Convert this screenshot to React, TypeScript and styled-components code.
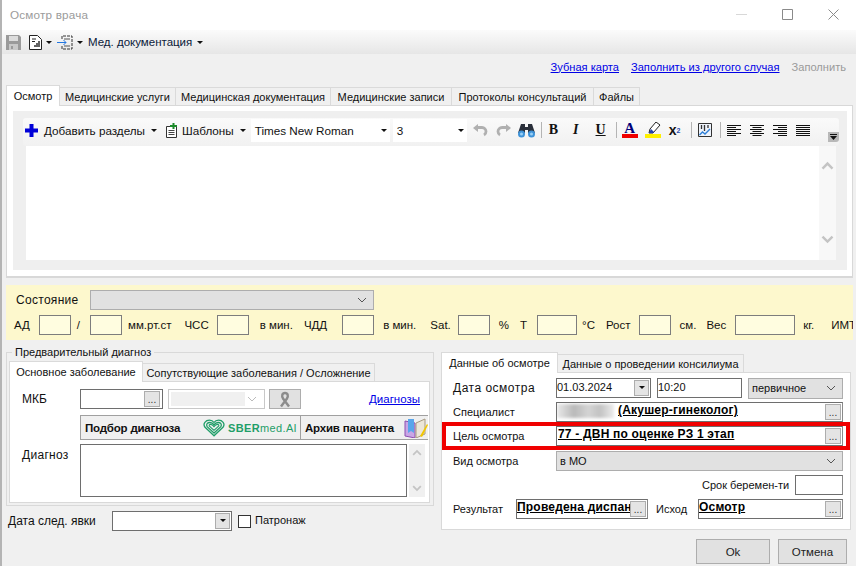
import React, { FC, ReactNode } from "react"
import styled, { createGlobalStyle } from "styled-components"

const GlobalStyle = createGlobalStyle`
  html, body {
    margin: 0;
    padding: 0;
    background: #f0f0f0;
  }
  * {
    box-sizing: border-box;
  }
`

const Window = styled.div`
  width: 856px;
  height: 566px;
  overflow: hidden;
  display: flex;
  flex-direction: column;
  background: #f0f0f0;
  border-left: 2px solid #b4b4b4;
  font-family: "Liberation Sans", Arial, sans-serif;
  font-size: 11px;
  color: #111;
`

const TitleBar = styled.div`
  height: 30px;
  flex: none;
  display: flex;
  align-items: center;
  background: #fff;
  padding: 0 0 2px 8px;
  color: #9b9b9b;
  font-size: 11.7px;
  letter-spacing: 0.2px;
`

const TitleText = styled.span`
  flex: 1;
`

const CaptionButton = styled.div`
  width: 46px;
  display: flex;
  justify-content: center;
`

const MenuBar = styled.div`
  height: 24px;
  flex: none;
  display: flex;
  align-items: center;
  padding-left: 4px;
  font-size: 11.5px;
  background: linear-gradient(#fbfbfb, #e6e6e6);
`

const MenuItem = styled.div<{ $ml?: number }>`
  display: flex;
  align-items: center;
  margin-left: ${(p) => p.$ml ?? 0}px;
  color: #0b1a3a;
`

const Caret = styled.span<{ $ml?: number }>`
  width: 0;
  height: 0;
  margin-left: ${(p) => p.$ml ?? 4}px;
  border-left: 3px solid transparent;
  border-right: 3px solid transparent;
  border-top: 3px solid #111;
`

const LinksBar = styled.div`
  height: 31px;
  flex: none;
  display: flex;
  align-items: center;
  justify-content: flex-end;
  gap: 12px;
  padding: 0 10px 6px 0;
  font-size: 11.1px;
`

const LinkText = styled.a<{ $off?: boolean }>`
  color: ${(p) => (p.$off ? "#9a9a9a" : "#0000e6")};
  text-decoration: ${(p) => (p.$off ? "none" : "underline")};
  cursor: pointer;
`

const TabStrip = styled.div<{ $ml?: number }>`
  display: flex;
  height: 20px;
  flex: none;
  margin-left: ${(p) => p.$ml ?? 0}px;
  position: relative;
  z-index: 1;
`

const Tab = styled.div<{ $w: number; $active?: boolean }>`
  width: ${(p) => p.$w}px;
  display: flex;
  align-items: center;
  justify-content: center;
  white-space: nowrap;
  border: 1px solid #dadada;
  border-left-width: ${(p) => (p.$active ? 1 : 0)}px;
  border-bottom: none;
  background: ${(p) => (p.$active ? "#fff" : "#f0f0f0")};
  margin-top: ${(p) => (p.$active ? 0 : 2)}px;
  height: ${(p) => (p.$active ? "calc(100% + 1px)" : "calc(100% - 2px)")};
`

const ExamPanel = styled.div`
  flex: none;
  height: 173px;
  margin: 0 3px 0 4px;
  padding: 5px 5px 6px 6px;
  background: #fff;
  border: 1px solid #d8d8d8;
  border-bottom-width: 2px;
`

const EditorArea = styled.div`
  height: 100%;
  padding: 7px 8px 10px 10px;
  background: #efefef;
  display: flex;
  flex-direction: column;
`

const Toolbar = styled.div`
  height: 28px;
  flex: none;
  display: flex;
  align-items: center;
  position: relative;
  font-size: 11.7px;
  background: linear-gradient(#fafafa, #f1f1f1);
  border-radius: 3px;
  padding: 0 0 4px 2px;
`

const ToolItem = styled.div<{ $ml?: number; $w?: number }>`
  display: flex;
  align-items: center;
  flex: none;
  white-space: nowrap;
  width: ${(p) => (p.$w ? `${p.$w}px` : "auto")};
  margin-left: ${(p) => p.$ml ?? 0}px;
`

const ToolLetter = styled(ToolItem)<{ $italic?: boolean; $underline?: boolean }>`
  font-family: "Liberation Serif", serif;
  font-weight: bold;
  font-size: 14px;
  font-style: ${(p) => (p.$italic ? "italic" : "normal")};
  text-decoration: ${(p) => (p.$underline ? "underline" : "none")};
`

const PowerLetter = styled(ToolItem)`
  font-weight: bold;
  font-size: 14px;
  sup {
    font-size: 7px;
    color: #2a4fb0;
  }
`

const FontSelect = styled.div<{ $w: number; $ml: number }>`
  width: ${(p) => p.$w}px;
  height: 23px;
  flex: none;
  margin-left: ${(p) => p.$ml}px;
  display: flex;
  align-items: center;
  justify-content: space-between;
  padding: 0 3px 0 4px;
  background: #fff;
`

const ToolSep = styled.div<{ $ml: number }>`
  width: 1px;
  height: 16px;
  flex: none;
  margin-left: ${(p) => p.$ml}px;
  background: #b4b4b4;
`

const ColorLetter = styled.div`
  width: 16px;
  flex: none;
  margin-left: 5px;
  display: flex;
  flex-direction: column;
  align-items: center;
  font-family: "Liberation Serif", serif;
  font-weight: bold;
  font-size: 15px;
  line-height: 12px;
  color: #00007a;
  &::after {
    content: "";
    width: 16px;
    height: 4px;
    background: #f00000;
  }
`

const ToolEnd = styled.div`
  position: absolute;
  right: 0;
  top: 14px;
  width: 11px;
  height: 10px;
  display: flex;
  align-items: center;
  justify-content: center;
  background: #b8b8b8;
  border-radius: 0 0 3px 0;
`

const EditorBody = styled.div`
  flex: 1;
  display: flex;
  margin: 0 3px;
`

const EditorText = styled.div`
  flex: 1;
  background: #fff;
`

const ScrollTrack = styled.div`
  width: 17px;
  flex: none;
  display: flex;
  flex-direction: column;
  justify-content: space-between;
  align-items: center;
  padding: 15px 0 16px;
  background: #f8f8f8;
`

const SmallScroll = styled(ScrollTrack)`
  width: 16px;
  margin-left: 2px;
  padding: 5px 0;
  background: #f0f0f0;
`

const StatePanel = styled.div`
  flex: none;
  height: 55px;
  margin: 7px 3px 0 4px;
  padding: 5px 0 0 8px;
  font-size: 11.5px;
  background: #fdf8cd;
  overflow: hidden;
`

const StateRow = styled.div`
  height: 20px;
  display: flex;
  align-items: center;
  white-space: nowrap;
`

const StateLabel = styled.span`
  width: 74px;
  margin-left: 2px;
  font-size: 12px;
  letter-spacing: 0.3px;
`

const VitalRow = styled.div`
  height: 20px;
  margin-top: 5px;
  display: flex;
  align-items: center;
  white-space: nowrap;
`

const VitalText = styled.span<{ $ml: number }>`
  margin-left: ${(p) => p.$ml}px;
`

const VitalInput = styled.div<{ $w: number; $ml: number }>`
  width: ${(p) => p.$w}px;
  height: 20px;
  flex: none;
  margin-left: ${(p) => p.$ml}px;
  background: #fffde0;
  border: 1px solid #7d7d7d;
`

const SelectBox = styled.div<{ $w: number; $ml?: number; $h?: number }>`
  width: ${(p) => p.$w}px;
  height: ${(p) => p.$h ?? 20}px;
  flex: none;
  margin-left: ${(p) => p.$ml ?? 0}px;
  display: flex;
  align-items: center;
  justify-content: space-between;
  padding: 0 6px 0 3px;
  background: #e1e1e1;
  border: 1px solid #adadad;
`

const Columns = styled.div`
  flex: none;
  display: flex;
  gap: 7px;
  margin: 5px 0 0 4px;
`

const LeftColumn = styled.div`
  width: 428px;
  flex: none;
`

const Group = styled.fieldset`
  height: 161px;
  margin: 0;
  padding: 2px 3px 2px 2px;
  min-width: 0;
  border: 1px solid #d9d9d9;
`

const GroupTitle = styled.legend`
  margin-left: 3px;
  padding: 0 3px;
  line-height: 14px;
`

const TabPanel = styled.div<{ $h: number }>`
  height: ${(p) => p.$h}px;
  background: #fff;
  border: 1px solid #d9d9d9;
`

const DiagnosisPanel = styled(TabPanel)`
  padding: 7px 4px 0 12px;
  display: flex;
  flex-direction: column;
`

const MkbRow = styled.div`
  height: 20px;
  flex: none;
  display: flex;
  align-items: center;
`

const MkbLabel = styled.span`
  width: 58px;
  flex: none;
  font-size: 12px;
`

const PickInput = styled.div`
  width: 83px;
  height: 20px;
  flex: none;
  display: flex;
  align-items: center;
  justify-content: flex-end;
  padding-right: 1px;
  background: #fff;
  border: 1px solid #6e6e6e;
`

const DisabledSelect = styled.div`
  width: 97px;
  height: 20px;
  flex: none;
  margin-left: 5px;
  display: flex;
  align-items: center;
  justify-content: space-between;
  padding: 2px 7px 2px 2px;
  background: #fff;
  border: 1px solid #c8c8c8;
`

const DisabledFill = styled.div`
  width: 74px;
  height: 100%;
  background: #f0f0f0;
`

const RibbonButton = styled.div`
  width: 32px;
  height: 20px;
  flex: none;
  margin-left: 4px;
  display: flex;
  align-items: center;
  justify-content: center;
  background: #e1e1e1;
  border: 1px solid #adadad;
`

const DiagnosesLink = styled(LinkText)`
  margin-left: auto;
  margin-right: 5px;
  font-size: 11.5px;
`

const HelperRow = styled.div`
  width: 348px;
  height: 25px;
  flex: none;
  margin: 6px 0 0 58px;
  display: flex;
  overflow: hidden;
`

const HelperButton = styled.div<{ $w: number }>`
  width: ${(p) => p.$w}px;
  flex: none;
  display: flex;
  align-items: center;
  padding-left: 4px;
  background: #f0f0f0;
  border: 1px solid #a0a0a0;
  border-right-width: 0;
  font-size: 11.5px;
  font-weight: bold;
  letter-spacing: -0.2px;
  white-space: nowrap;
`

const HelperName = styled.span`
  flex: 1;
`

const BrandText = styled.span`
  margin: 0 3px 0 3px;
  color: #1f9e68;
  font-weight: normal;
  font-size: 11px;
  letter-spacing: 0.35px;
  b {
    font-weight: bold;
  }
`

const DiagnosisRow = styled.div`
  flex: none;
  display: flex;
  margin-top: 4px;
`

const DiagnosisLabel = styled.span`
  width: 58px;
  flex: none;
  padding-top: 4px;
  font-size: 12px;
  letter-spacing: 0.3px;
`

const DiagnosisText = styled.div`
  width: 328px;
  height: 53px;
  background: #fff;
  border: 1px solid #6e6e6e;
`

const NextVisitRow = styled.div`
  margin-top: 5px;
  padding-left: 2px;
  display: flex;
  align-items: center;
`

const NextVisitLabel = styled.span`
  width: 104px;
  flex: none;
  font-size: 12px;
`

const DateBox = styled.div<{ $w: number; $ml?: number }>`
  width: ${(p) => p.$w}px;
  height: 20px;
  flex: none;
  margin-left: ${(p) => p.$ml ?? 0}px;
  display: flex;
  align-items: center;
  justify-content: space-between;
  padding: 0 1px 3px 0;
  background: #fff;
  border: 1px solid #6e6e6e;
`

const DateArrow = styled.div`
  width: 15px;
  height: 16px;
  margin-bottom: -2px;
  display: flex;
  align-items: center;
  justify-content: center;
  background: #e4e4e4;
  border: 1px solid #adadad;
`

const CheckBox = styled.div`
  width: 13px;
  height: 13px;
  margin-left: 6px;
  background: #fff;
  border: 1px solid #333;
`

const CheckLabel = styled.span`
  margin-left: 4px;
  margin-top: -2px;
`

const RightColumn = styled.div`
  width: 410px;
  flex: none;
  padding-top: 7px;
`

const ExamDataPanel = styled(TabPanel)`
  padding: 5px 7px 0 11px;
  display: flex;
  flex-direction: column;
`

const FormRow = styled.div<{ $mt?: number }>`
  height: 20px;
  flex: none;
  display: flex;
  align-items: center;
  margin-top: ${(p) => p.$mt ?? 0}px;
`

const SpacedRow = styled(FormRow)`
  justify-content: flex-end;
`

const HighlightRow = styled.div`
  height: 28px;
  flex: none;
  display: flex;
  align-items: center;
  margin: 0 -7px 0 -11px;
  padding: 0 4px 0 7px;
  border: 4px solid #f00000;
`

const RowLabel = styled.span<{ $w: number; $ml?: number }>`
  width: ${(p) => p.$w}px;
  flex: none;
  margin-left: ${(p) => p.$ml ?? 0}px;
`

const WideLabel = styled(RowLabel)`
  font-size: 12px;
  letter-spacing: 0.5px;
`

const TextField = styled.div<{ $w: number }>`
  width: ${(p) => p.$w}px;
  height: 20px;
  flex: none;
  padding: 1px 0 0 0;
  display: flex;
  align-items: flex-start;
  background: #fff;
  border: 1px solid #6e6e6e;
  border-right-color: #8a8a8a;
  overflow: hidden;
`

const BoldValue = styled.span<{ $ml?: number }>`
  flex: 1;
  min-width: 0;
  margin-left: ${(p) => p.$ml ?? 0}px;
  overflow: hidden;
  white-space: nowrap;
  font-family: "Liberation Sans", Arial, sans-serif;
  font-size: 12px;
  font-weight: bold;
  letter-spacing: 0.2px;
  text-decoration: underline;
  line-height: 13px;
  color: #000;
`

const BlurredName = styled.span`
  width: 57px;
  height: 14px;
  flex: none;
  background: linear-gradient(90deg, #e9e9e9, #b9b9b9 30%, #d4d4d4 55%, #c2c2c2 75%, #ececec);
  filter: blur(1.5px);
`

const DotsButton = styled.div`
  width: 16px;
  height: 16px;
  flex: none;
  margin: 0 1px 0 0;
  display: flex;
  align-items: flex-end;
  justify-content: center;
  font-size: 10px;
  line-height: 13px;
  color: #333;
  background: #e4e4e4;
  border: 1px solid #adadad;
`

const FooterRow = styled.div`
  margin-top: 9px;
  padding-right: 4px;
  display: flex;
  justify-content: flex-end;
  gap: 8px;
`

const DialogButton = styled.button<{ $w: number }>`
  width: ${(p) => p.$w}px;
  height: 25px;
  padding: 0;
  font: inherit;
  font-size: 11.5px;
  color: #222;
  background: #e1e1e1;
  border: 1px solid #adadad;
`

const Chevron: FC<{ color?: string }> = ({ color = "#555" }) => (
  <svg width="10" height="6" viewBox="0 0 10 6" fill="none">
    <path d="M1 1l4 4 4-4" stroke={color} strokeWidth="1" />
  </svg>
)

const ScrollUp: FC<{ size?: number }> = ({ size = 13 }) => (
  <svg width={size} height={size * 0.7} viewBox="0 0 13 9" fill="none">
    <path d="M1.5 7.5l5-5 5 5" stroke="#c4c4c4" strokeWidth="2.4" />
  </svg>
)

const ScrollDown: FC<{ size?: number }> = ({ size = 13 }) => (
  <svg width={size} height={size * 0.7} viewBox="0 0 13 9" fill="none">
    <path d="M1.5 1.5l5 5 5-5" stroke="#c4c4c4" strokeWidth="2.4" />
  </svg>
)

const SaveIcon = () => (
  <svg width="15" height="15" viewBox="0 0 15 15">
    <path d="M0 0h13l2 2v13H0z" fill="#9a9a9a" />
    <path d="M3 1h9v5H3z" fill="#dcdcdc" />
    <path d="M3 9h9v6H3z" fill="#c8c8c8" />
    <path d="M5 11h2v3H5z" fill="#9a9a9a" />
  </svg>
)

const ReportIcon = () => (
  <svg width="13" height="15" viewBox="0 0 13 15" fill="none">
    <path d="M.5.5h8l4 4v10H.5z" fill="#fff" stroke="#222" />
    <path d="M3 4h4M3 6.5h3" stroke="#222" />
    <path d="M6 12v-2M8 12V8M10 12V6" stroke="#222" strokeWidth="1.4" />
  </svg>
)

const ImportIcon = () => (
  <svg width="16" height="15" viewBox="0 0 16 15" fill="none">
    <path d="M5 4V1h10v13H5v-3" stroke="#333" strokeDasharray="3 1" />
    <path d="M7 4h6M7 11h6" stroke="#555" />
    <path d="M0 7.5h9M6.5 5L9 7.5 6.5 10" stroke="#2477e0" />
  </svg>
)

const PlusIcon = () => (
  <svg width="13" height="13" viewBox="0 0 13 13">
    <path d="M4.500 0h4v4.500H13v4H8.500V13h-4V8.500H0v-4h4.500z" fill="#0000d8" />
  </svg>
)

const TemplateIcon = () => (
  <svg width="13" height="15" viewBox="0 0 13 15" fill="none">
    <path d="M1.500 3.500h10v11h-10z" fill="#fff" stroke="#333" />
    <path d="M3.500 7.500h6M3.500 9.500h6M3.500 11.500h6" stroke="#444" />
    <path d="M5 2h2.500V0h2v2H12v2H9.500v2h-2V4H5z" fill="#1c8a2a" />
  </svg>
)

const UndoIcon: FC<{ flip?: boolean }> = ({ flip }) => (
  <svg width="15" height="13" viewBox="0 0 15 13" fill="none">
    <g transform={flip ? "translate(15 0) scale(-1 1)" : undefined}>
      <path d="M4 3.500h5a4 4 0 0 1 4 4 4 4 0 0 1-2 3.500" stroke="#b0b0b0" strokeWidth="2.800" />
      <path d="M0 4l5-4v8z" fill="#b0b0b0" />
    </g>
  </svg>
)

const BinocularsIcon = () => (
  <svg width="17" height="15" viewBox="0 0 17 15">
    <path d="M3 1h4v3h3V1h4l3 9H10V7H7v3H0z" fill="#2a2f3a" />
    <circle cx="3.500" cy="11" r="3.500" fill="#3f93d8" />
    <circle cx="13.500" cy="11" r="3.500" fill="#3f93d8" />
    <circle cx="3.500" cy="11" r="1.500" fill="#9bd0f5" />
    <circle cx="13.500" cy="11" r="1.500" fill="#9bd0f5" />
  </svg>
)

const HighlightIcon = () => (
  <svg width="16" height="16" viewBox="0 0 16 16">
    <path d="M11 0l4 3-7 8H4l1-4z" fill="#fff" stroke="#222" />
    <path d="M6 7l3 3-1 1H4z" fill="#2340b0" />
    <path d="M0 12h16v4H0z" fill="#fff000" />
  </svg>
)

const ChartIcon = () => (
  <svg width="14" height="14" viewBox="0 0 14 14" fill="none">
    <path d="M.5.5h13v13H.5z" fill="#eef3fb" stroke="#333" />
    <path d="M3.500 2v4M6.500 2v6M10 2v3" stroke="#333" strokeWidth="1.300" />
    <path d="M1.500 12l3-3 2.500 2 5-5" stroke="#2f80d8" strokeWidth="1.400" />
  </svg>
)

const AlignIcon: FC<{ mode: "left" | "center" | "right" | "full" }> = ({ mode }) => {
  const rows = [14, 9, 14, 9, 14, 9]
  return (
    <svg width="14" height="11" viewBox="0 0 14 11">
      {rows.map((w, i) => {
        const width = mode === "full" ? 14 : w
        const x = mode === "right" ? 14 - width : mode === "center" ? (14 - width) / 2 : 0
        return <rect key={i} x={x} y={i * 2} width={width} height="1" fill="#111" />
      })}
    </svg>
  )
}

const RibbonIcon = () => (
  <svg width="14" height="17" viewBox="0 0 14 17" fill="none">
    <path d="M7 2C4 2 3.500 5 5 7.500l6 8M7 2c3 0 3.500 3 2 5.500l-6 8" stroke="#8c8c8c" strokeWidth="2.400" />
  </svg>
)

const SberLogo = () => (
  <svg width="22" height="18" viewBox="0 0 24 19" fill="none">
    <path d="M12 18L2 8.500C-.5 4.500 3 1 7 1c2 0 4 1 5 2.500C13 2 15 1 17 1c4 0 7.500 3.500 5 7.500z" stroke="#1f9e68" strokeWidth="1.400" />
    <path d="M12 15L4.500 8C3 5.500 5 3.500 7.500 3.500c2 0 3.500 1 4.500 2.500 1-1.500 2.500-2.500 4.500-2.500C19 3.500 21 5.500 19.500 8z" stroke="#1f9e68" strokeWidth="1.400" />
    <path d="M12 12L7 7.500c-.8-1.200.2-2 1.200-2 1.500 0 2.800 1 3.800 2.500 1-1.500 2.300-2.500 3.800-2.500 1 0 2 .8 1.200 2z" stroke="#1f9e68" strokeWidth="1.200" />
  </svg>
)

const BookIcon = () => (
  <svg width="24" height="20" viewBox="0 0 24 20" fill="none">
    <path d="M1 3v15l10 2V5z" fill="#c9a6e6" stroke="#8d4fb0" />
    <path d="M4 1h6v14l-3-2-3 2z" fill="#5aa5ea" />
    <path d="M12 5l9-4v15l-9 4z" fill="#ece6d8" stroke="#a79a80" />
    <path d="M16 18l7-12 1 1-6 12z" fill="#f2c600" />
  </svg>
)

interface VitalItem {
  text: string
  gap: number
  input?: number
  inputGap?: number
}

const vitals: VitalItem[] = [
  { text: "АД", gap: 0, input: 32, inputGap: 9 },
  { text: "/", gap: 6, input: 32, inputGap: 10 },
  { text: "мм.рт.ст", gap: 6 },
  { text: "ЧСС", gap: 13, input: 32, inputGap: 8 },
  { text: "в мин.", gap: 11 },
  { text: "ЧДД", gap: 11, input: 32, inputGap: 15 },
  { text: "в мин.", gap: 9 },
  { text: "Sat.", gap: 14, input: 32, inputGap: 7 },
  { text: "%", gap: 9 },
  { text: "Т", gap: 11, input: 40, inputGap: 10 },
  { text: "°C", gap: 5 },
  { text: "Рост", gap: 11, input: 32, inputGap: 8 },
  { text: "см.", gap: 9 },
  { text: "Вес", gap: 10, input: 60, inputGap: 9 },
  { text: "кг.", gap: 8 },
  { text: "ИМТ", gap: 17 },
]

const mainTabs: [string, number][] = [
  ["Осмотр", 54],
  ["Медицинские услуги", 116],
  ["Медицинская документация", 155],
  ["Медицинские записи", 121],
  ["Протоколы консультаций", 142],
  ["Файлы", 46],
]

const FieldWithDots: FC<{ w: number; children: ReactNode }> = ({ w, children }) => (
  <TextField $w={w}>
    {children}
    <DotsButton>...</DotsButton>
  </TextField>
)

const App: FC = () => {
  return (
    <>
      <GlobalStyle />
      <Window>
        <TitleBar>
          <TitleText>Осмотр врача</TitleText>
          <CaptionButton>
            <svg width="11" height="1"><path d="M0 .5h11" stroke="#d8d8d8" /></svg>
          </CaptionButton>
          <CaptionButton>
            <svg width="11" height="11" fill="none"><path d="M.5.5h10v10H.5z" stroke="#8a8a8a" /></svg>
          </CaptionButton>
          <CaptionButton>
            <svg width="11" height="11" fill="none"><path d="M.5.5l10 10M10.500.5l-10 10" stroke="#8a8a8a" /></svg>
          </CaptionButton>
        </TitleBar>

        <MenuBar>
          <SaveIcon />
          <MenuItem $ml={8}><ReportIcon /><Caret /></MenuItem>
          <MenuItem $ml={5}><ImportIcon /><Caret /></MenuItem>
          <MenuItem $ml={5}>Мед. документация<Caret $ml={5} /></MenuItem>
        </MenuBar>

        <LinksBar>
          <LinkText>Зубная карта</LinkText>
          <LinkText>Заполнить из другого случая</LinkText>
          <LinkText $off>Заполнить</LinkText>
        </LinksBar>

        <TabStrip $ml={4}>
          {mainTabs.map(([name, w], i) => (
            <Tab key={name} $w={w} $active={i === 0}>{name}</Tab>
          ))}
        </TabStrip>

        <ExamPanel>
          <EditorArea>
            <Toolbar>
              <ToolItem><PlusIcon /></ToolItem>
              <ToolItem $ml={6}>Добавить разделы<Caret $ml={6} /></ToolItem>
              <ToolItem $ml={8}><TemplateIcon /></ToolItem>
              <ToolItem $ml={4}>Шаблоны<Caret $ml={6} /></ToolItem>
              <FontSelect $w={139} $ml={5}>Times New Roman<Caret /></FontSelect>
              <FontSelect $w={74} $ml={3}>3<Caret /></FontSelect>
              <ToolItem $ml={6}><UndoIcon /></ToolItem>
              <ToolItem $ml={8}><UndoIcon flip /></ToolItem>
              <ToolItem $ml={7}><BinocularsIcon /></ToolItem>
              <ToolSep $ml={6} />
              <ToolLetter $ml={7}>B</ToolLetter>
              <ToolLetter $ml={15} $italic>I</ToolLetter>
              <ToolLetter $ml={17} $underline>U</ToolLetter>
              <ToolSep $ml={10} />
              <ColorLetter>A</ColorLetter>
              <ToolItem $ml={7}><HighlightIcon /></ToolItem>
              <PowerLetter $ml={8} $w={14}>x<sup>2</sup></PowerLetter>
              <ToolSep $ml={8} />
              <ToolItem $ml={6}><ChartIcon /></ToolItem>
              <ToolSep $ml={8} />
              <ToolItem $ml={6}><AlignIcon mode="left" /></ToolItem>
              <ToolItem $ml={9}><AlignIcon mode="center" /></ToolItem>
              <ToolItem $ml={9}><AlignIcon mode="right" /></ToolItem>
              <ToolItem $ml={9}><AlignIcon mode="full" /></ToolItem>
              <ToolEnd>
                <svg width="7" height="6"><path d="M0 0h7v1H0zM0 2h7L3.500 6z" fill="#111" /></svg>
              </ToolEnd>
            </Toolbar>
            <EditorBody>
              <EditorText />
              <ScrollTrack>
                <ScrollUp />
                <ScrollDown />
              </ScrollTrack>
            </EditorBody>
          </EditorArea>
        </ExamPanel>

        <StatePanel>
          <StateRow>
            <StateLabel>Состояние</StateLabel>
            <SelectBox $w={284}><span /><Chevron /></SelectBox>
          </StateRow>
          <VitalRow>
            {vitals.map((v, i) => (
              <React.Fragment key={i}>
                <VitalText $ml={v.gap}>{v.text}</VitalText>
                {v.input ? <VitalInput $w={v.input} $ml={v.inputGap ?? 8} /> : null}
              </React.Fragment>
            ))}
          </VitalRow>
        </StatePanel>

        <Columns>
          <LeftColumn>
            <Group>
              <GroupTitle>Предварительный диагноз</GroupTitle>
              <TabStrip>
                <Tab $w={134} $active>Основное заболевание</Tab>
                <Tab $w={232}>Сопутствующие заболевания / Осложнение</Tab>
              </TabStrip>
              <DiagnosisPanel $h={122}>
                <MkbRow>
                  <MkbLabel>МКБ</MkbLabel>
                  <PickInput><DotsButton>...</DotsButton></PickInput>
                  <DisabledSelect><DisabledFill /><Chevron color="#bbb" /></DisabledSelect>
                  <RibbonButton><RibbonIcon /></RibbonButton>
                  <DiagnosesLink>Диагнозы</DiagnosesLink>
                </MkbRow>
                <HelperRow>
                  <HelperButton $w={220}>
                    <HelperName>Подбор диагноза</HelperName>
                    <SberLogo />
                    <BrandText><b>SBER</b>med.AI</BrandText>
                  </HelperButton>
                  <HelperButton $w={128}>
                    <HelperName>Архив пациента</HelperName>
                    <BookIcon />
                  </HelperButton>
                </HelperRow>
                <DiagnosisRow>
                  <DiagnosisLabel>Диагноз</DiagnosisLabel>
                  <DiagnosisText />
                  <SmallScroll>
                    <ScrollUp size={10} />
                    <ScrollDown size={10} />
                  </SmallScroll>
                </DiagnosisRow>
              </DiagnosisPanel>
            </Group>
            <NextVisitRow>
              <NextVisitLabel>Дата след. явки</NextVisitLabel>
              <DateBox $w={120}>
                <span />
                <DateArrow><Caret $ml={0} /></DateArrow>
              </DateBox>
              <CheckBox />
              <CheckLabel>Патронаж</CheckLabel>
            </NextVisitRow>
          </LeftColumn>

          <RightColumn>
            <TabStrip>
              <Tab $w={117} $active>Данные об осмотре</Tab>
              <Tab $w={186}>Данные о проведении консилиума</Tab>
            </TabStrip>
            <ExamDataPanel $h={158}>
              <FormRow>
                <WideLabel $w={103}>Дата осмотра</WideLabel>
                <DateBox $w={95}>01.03.2024<DateArrow><Caret $ml={0} /></DateArrow></DateBox>
                <DateBox $w={85} $ml={6}>10:20</DateBox>
                <SelectBox $w={95} $ml={6} $h={21}>первичное<Chevron /></SelectBox>
              </FormRow>
              <FormRow $mt={4}>
                <RowLabel $w={103}>Специалист</RowLabel>
                <FieldWithDots w={287}>
                  <BlurredName />
                  <BoldValue $ml={4}>(Акушер-гинеколог)</BoldValue>
                </FieldWithDots>
              </FormRow>
              <HighlightRow>
                <RowLabel $w={103}>Цель осмотра</RowLabel>
                <FieldWithDots w={287}>
                  <BoldValue $ml={1}>77 - ДВН по оценке РЗ 1 этап</BoldValue>
                </FieldWithDots>
              </HighlightRow>
              <FormRow $mt={1}>
                <RowLabel $w={103}>Вид осмотра</RowLabel>
                <SelectBox $w={287}>в МО<Chevron /></SelectBox>
              </FormRow>
              <SpacedRow $mt={4}>
                <RowLabel $w={93}>Срок беремен-ти</RowLabel>
                <TextField $w={48} />
              </SpacedRow>
              <FormRow $mt={4}>
                <RowLabel $w={63}>Результат</RowLabel>
                <FieldWithDots w={132}>
                  <BoldValue>Проведена диспансеризация</BoldValue>
                </FieldWithDots>
                <RowLabel $w={42} $ml={8}>Исход</RowLabel>
                <FieldWithDots w={145}>
                  <BoldValue>Осмотр</BoldValue>
                </FieldWithDots>
              </FormRow>
            </ExamDataPanel>
            <FooterRow>
              <DialogButton $w={74}>Ok</DialogButton>
              <DialogButton $w={69}>Отмена</DialogButton>
            </FooterRow>
          </RightColumn>
        </Columns>
      </Window>
    </>
  )
}

export default App
